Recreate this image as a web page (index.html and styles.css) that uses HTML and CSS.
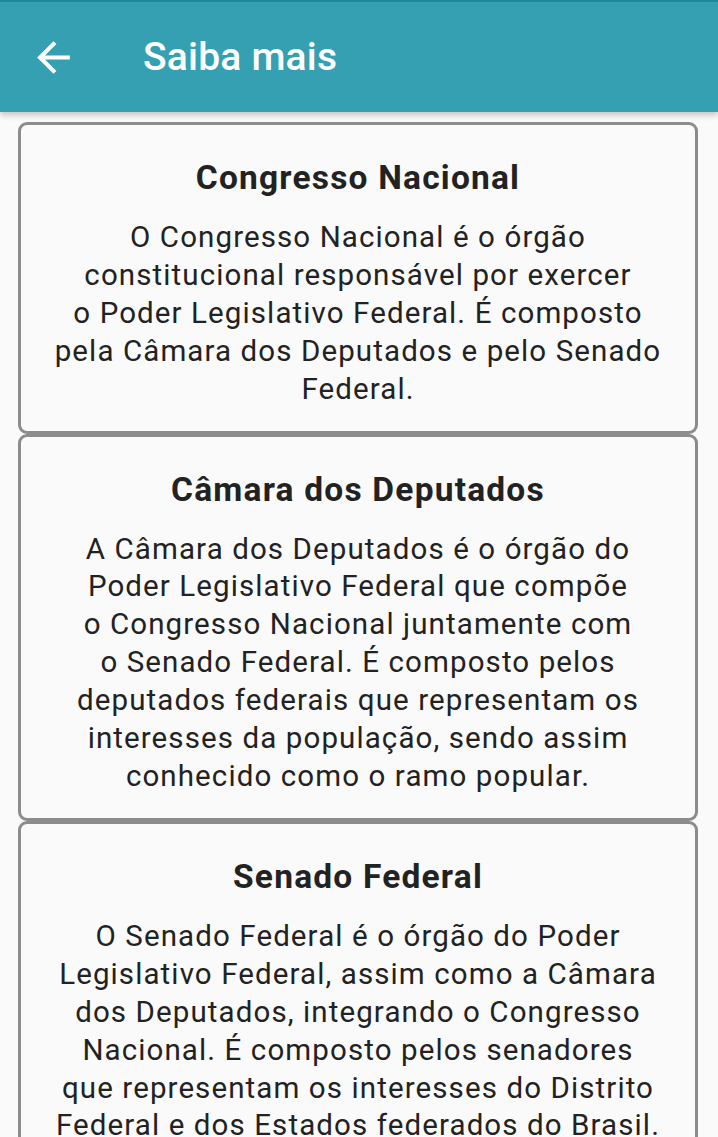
FILE: index.html
```html
<!DOCTYPE html>
<html lang="pt-BR">
<head>
<meta charset="utf-8">
<title>Saiba mais</title>
<link rel="stylesheet" href="styles.css">
</head>
<body>
<header class="appbar">
  <svg class="back" viewBox="0 0 24 24" aria-hidden="true"><path d="M20 11H7.83l5.59-5.59L12 4l-8 8 8 8 1.41-1.41L7.83 13H20v-2z" fill="#fff"/></svg>
  <h1 class="appbar-title">Saiba mais</h1>
</header>
<main class="content">
  <section class="card">
    <h2 class="card-title">Congresso Nacional</h2>
    <p class="card-text">O Congresso Nacional é o órgão<br>constitucional responsável por exercer<br>o Poder Legislativo Federal. É composto<br>pela Câmara dos Deputados e pelo Senado<br>Federal.</p>
  </section>
  <section class="card">
    <h2 class="card-title">Câmara dos Deputados</h2>
    <p class="card-text">A Câmara dos Deputados é o órgão do<br>Poder Legislativo Federal que compõe<br>o Congresso Nacional juntamente com<br>o Senado Federal. É composto pelos<br>deputados federais que representam os<br>interesses da população, sendo assim<br>conhecido como o ramo popular.</p>
  </section>
  <section class="card">
    <h2 class="card-title">Senado Federal</h2>
    <p class="card-text">O Senado Federal é o órgão do Poder<br>Legislativo Federal, assim como a Câmara<br>dos Deputados, integrando o Congresso<br>Nacional. É composto pelos senadores<br>que representam os interesses do Distrito<br>Federal e dos Estados federados do Brasil.</p>
  </section>
</main>
</body>
</html>
```
FILE: styles.css
```css
html, body {
  margin: 0;
  padding: 0;
  background: #fafafa;
  font-family: Roboto, "Noto Sans", sans-serif;
  color: #212121;
}
.appbar {
  position: relative;
  z-index: 1;
  height: 110px;
  border-top: 2px solid #1e8897;
  background: #35a0b1;
  display: flex;
  align-items: center;
  box-shadow: 0 3px 6px rgba(0, 0, 0, 0.22);
}
.back {
  width: 49px;
  height: 49px;
  margin-left: 29px;
  flex: none;
}
.appbar-title {
  margin: 0 0 0 65px;
  font-size: 39px;
  font-weight: 500;
  letter-spacing: 0.2px;
  color: #ffffff;
  line-height: 44px;
}
.content {
  padding: 10px 20px 0 18px;
  height: 1015px;
  overflow: hidden;
}
.card {
  border: 3px solid #8c8c8c;
  border-radius: 9px;
  background: #fafafa;
  padding: 33px 8px 22px;
  text-align: center;
}
.card-title {
  margin: 0 0 21px;
  font-size: 33.5px;
  line-height: 40px;
  font-weight: 700;
  letter-spacing: 1.2px;
  color: #222222;
}
.card-text {
  margin: 0;
  font-size: 29.5px;
  line-height: 37.9px;
  letter-spacing: 1.1px;
  white-space: nowrap;
  color: #222222;
}
```
